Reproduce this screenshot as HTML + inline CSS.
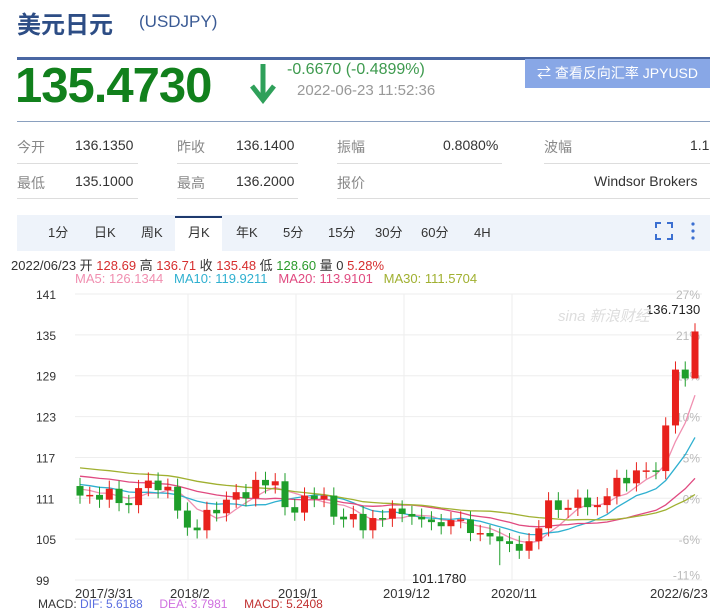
<!DOCTYPE html>
<html><head><meta charset="utf-8"><style>
body{margin:0;width:716px;height:603px;overflow:hidden;background:#fff;font-family:"Liberation Sans","Noto Sans CJK SC",sans-serif;position:relative}
.a{position:absolute;white-space:nowrap}
.lbl{color:#888;font-size:14px}.val{color:#333;font-size:14px}
.tab{position:absolute;top:224px;font-size:13px;color:#333;line-height:18px}
</style></head><body>
<div class="a" style="left:17px;top:5px;font-size:24px;font-weight:bold;color:#2d4d85">美元日元</div>
<div class="a" style="left:139px;top:12px;font-size:17px;color:#3a5a94">(USDJPY)</div>
<div class="a" style="left:17px;top:57px;width:693px;height:3px;background:#4a67a3"></div>
<div class="a" style="left:15px;top:58px;font-size:49px;font-weight:bold;color:#11801c;letter-spacing:-1px">135.4730</div>
<svg class="a" style="left:249px;top:62px" width="28" height="42"><path d="M14 2V34" stroke="#2fa05a" stroke-width="5"/><path d="M3 24L14 38L25 24" stroke="#2fa05a" stroke-width="5" fill="none"/></svg>
<div class="a" style="left:287px;top:61px;font-size:16px;color:#3d9a4e">-0.6670 (-0.4899%)</div>
<div class="a" style="left:297px;top:82px;font-size:15px;color:#999">2022-06-23 11:52:36</div>
<div class="a" style="left:525px;top:59px;width:185px;height:29px;background:#88a7e6;color:#fff;font-size:14px;line-height:29px;text-align:center">⇄ 查看反向汇率 JPYUSD</div>
<div class="a" style="left:17px;top:121px;width:693px;height:1px;background:#8aa0bf"></div>
<div class="a lbl" style="left:17px;top:137px">今开</div><div class="a val" style="left:75px;top:137px">136.1350</div>
<div class="a lbl" style="left:177px;top:137px">昨收</div><div class="a val" style="left:236px;top:137px">136.1400</div>
<div class="a lbl" style="left:337px;top:137px">振幅</div><div class="a val" style="left:443px;top:137px">0.8080%</div>
<div class="a lbl" style="left:544px;top:137px">波幅</div><div class="a val" style="left:690px;top:137px">1.1</div>
<div class="a lbl" style="left:17px;top:173px">最低</div><div class="a val" style="left:75px;top:173px">135.1000</div>
<div class="a lbl" style="left:177px;top:173px">最高</div><div class="a val" style="left:236px;top:173px">136.2000</div>
<div class="a lbl" style="left:337px;top:173px">报价</div><div class="a val" style="left:594px;top:173px">Windsor Brokers</div>
<div class="a" style="left:17px;top:163px;width:121px;height:1px;background:#ddd"></div>
<div class="a" style="left:177px;top:163px;width:121px;height:1px;background:#ddd"></div>
<div class="a" style="left:337px;top:163px;width:165px;height:1px;background:#ddd"></div>
<div class="a" style="left:544px;top:163px;width:166px;height:1px;background:#ddd"></div>
<div class="a" style="left:17px;top:198px;width:121px;height:1px;background:#ddd"></div>
<div class="a" style="left:177px;top:198px;width:121px;height:1px;background:#ddd"></div>
<div class="a" style="left:337px;top:198px;width:373px;height:1px;background:#ddd"></div>
<div class="a" style="left:17px;top:215px;width:693px;height:36px;background:#eef3fa"></div>
<div class="a" style="left:175px;top:216px;width:47px;height:35px;background:#fff;border-top:2px solid #1e3a6e"></div>
<div class="tab" style="left:48px">1分</div><div class="tab" style="left:94px">日K</div><div class="tab" style="left:141px">周K</div><div class="tab" style="left:188px">月K</div><div class="tab" style="left:236px">年K</div><div class="tab" style="left:283px">5分</div><div class="tab" style="left:328px">15分</div><div class="tab" style="left:375px">30分</div><div class="tab" style="left:421px">60分</div><div class="tab" style="left:474px">4H</div>
<svg class="a" style="left:655px;top:222px" width="45" height="18"><path d="M1 6V1H6M12 1H17V6M17 12V17H12M6 17H1V12" stroke="#3b6fd1" stroke-width="2" fill="none"/><circle cx="38" cy="2" r="1.6" fill="#3b6fd1"/><circle cx="38" cy="9" r="1.6" fill="#3b6fd1"/><circle cx="38" cy="16" r="1.6" fill="#3b6fd1"/></svg>
<div class="a" style="left:11px;top:255px;font-size:13px;color:#333">2022/06/23 开 <span style="color:#d62e2e">128.69</span> 高 <span style="color:#d62e2e">136.71</span> 收 <span style="color:#d62e2e">135.48</span> 低 <span style="color:#2a9a2a">128.60</span> 量 0 <span style="color:#d62e2e">5.28%</span></div>
<div class="a" style="left:75px;top:271px;font-size:13px"><span style="color:#f08fb0">MA5: 126.1344</span>&nbsp;&nbsp; <span style="color:#2fb0d0">MA10: 119.9211</span>&nbsp;&nbsp; <span style="color:#e04a80">MA20: 113.9101</span>&nbsp;&nbsp; <span style="color:#a0b030">MA30: 111.5704</span></div>
<svg id="ch" class="a" style="left:0;top:283px" width="716" height="320"></svg>
<div class="a" style="left:38px;top:597px;font-size:12px;color:#333">MACD: <span style="color:#5a6ee0">DIF: 5.6188</span>&nbsp;&nbsp;&nbsp;&nbsp; <span style="color:#d070e0">DEA: 3.7981</span>&nbsp;&nbsp;&nbsp;&nbsp; <span style="color:#c03030">MACD: 5.2408</span></div>
<script>
var c=[111.4,111.5,110.8,112.4,110.3,110.0,112.5,113.6,112.2,112.7,109.2,106.7,106.3,109.3,108.8,110.8,111.9,111.0,113.7,112.9,113.5,109.7,108.9,111.4,110.9,111.4,108.3,107.9,108.7,106.3,108.1,108.0,109.5,108.7,108.3,107.9,107.5,106.9,107.8,107.9,105.9,105.9,105.4,104.7,104.3,103.3,104.7,106.6,110.7,109.3,109.6,111.1,109.7,110.0,111.3,114.0,113.2,115.1,115.1,115.0,121.7,129.9,128.6,135.5];
var o0=112.8,T=283;function y(p){return 294+(141-p)*6.81-T}
var n=c.length,x0=80,dx=(695-80)/(n-1),s='';
[141,135,129,123,117,111,105,99].forEach(function(p){s+='<line x1="75" x2="702" y1="'+y(p)+'" y2="'+y(p)+'" stroke="#eee"/>'});
[188,296,404,512].forEach(function(x){s+='<line x1="'+x+'" x2="'+x+'" y1="11" y2="298" stroke="#eee"/>'});
var L=[['141',141],['135',135],['129',129],['123',123],['117',117],['111',111],['105',105],['99',99]];
L.forEach(function(l){s+='<text x="36" y="'+(y(l[1])+5)+'" font-size="12" fill="#333" font-family="Liberation Sans">'+l[0]+'</text>'});
var P=[['27%',141],['21%',135],['16%',129],['10%',123],['5%',117],['0%',111],['-6%',105],['-11%',99.8]];
P.forEach(function(l){s+='<text x="700" text-anchor="end" y="'+(y(l[1])+5)+'" font-size="12" fill="#bbb" font-family="Liberation Sans">'+l[0]+'</text>'});
var ma=[[5,'#f08fb0'],[10,'#2fb0d0'],[20,'#e04a80'],[30,'#a0b030']];
ma.forEach(function(m){var d='';for(var i=0;i<n;i++){var sum=0,st=Math.max(0,i-m[0]+1);for(var j=st;j<=i;j++)sum+=c[j];var base=st==i-m[0]+1?sum/m[0]:(sum+(m[0]-(i-st+1))*(112+m[0]*0.12))/m[0];d+=(i?'L':'M')+(x0+i*dx).toFixed(1)+' '+y(base).toFixed(1)}s+='<path d="'+d+'" stroke="'+m[1]+'" stroke-width="1.3" fill="none"/>'});
for(var i=0;i<n;i++){var o=i?c[i-1]:o0,cl=c[i],up=cl>=o,col=up?'#e8211c':'#1e9e2a',x=x0+i*dx,hi=Math.max(o,cl)+1.2,lo=Math.min(o,cl)-1.2;if(i==n-1){hi=136.71;lo=128.6}if(i==43)lo=101.178;s+='<line x1="'+x+'" x2="'+x+'" y1="'+y(hi)+'" y2="'+y(lo)+'" stroke="'+col+'"/>';var t=y(Math.max(o,cl)),h=Math.max(1.5,y(Math.min(o,cl))-t);s+='<rect x="'+(x-3.5)+'" y="'+t+'" width="7" height="'+h+'" fill="'+col+'"/>'}
s+='<text x="412" y="300" font-size="13" fill="#222" font-family="Liberation Sans">101.1780</text>';
s+='<text x="646" y="31" font-size="13" fill="#222" font-family="Liberation Sans">136.7130</text>';
s+='<text x="558" y="38" font-size="15" fill="#ddd" font-style="italic" font-family="Liberation Sans,Noto Sans CJK SC">sina 新浪财经</text>';
var X=[['2017/3/31',75],['2018/2',170],['2019/1',278],['2019/12',383],['2020/11',491],['2022/6/23',650]];
X.forEach(function(l){s+='<text x="'+l[1]+'" y="315" font-size="13" fill="#333" font-family="Liberation Sans">'+l[0]+'</text>'});
document.getElementById('ch').innerHTML=s;
</script>
</body></html>
